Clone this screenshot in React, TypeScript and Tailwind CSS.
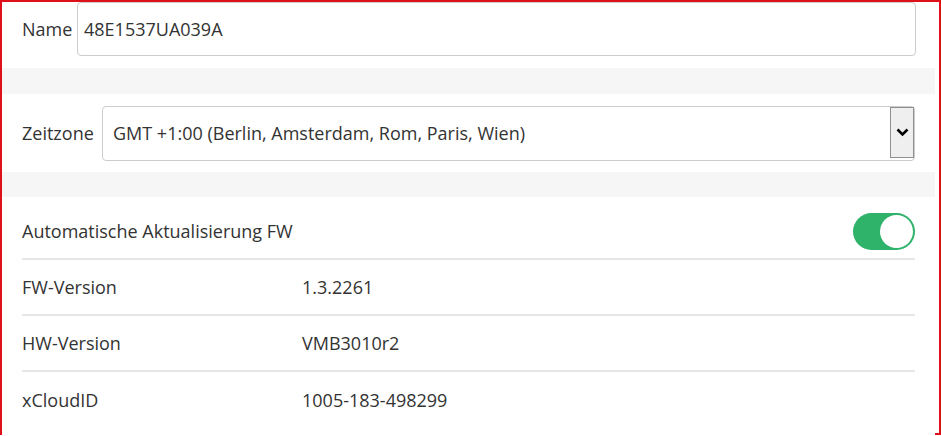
import { useState } from "react";

const rows = [
  { label: "FW-Version", value: "1.3.2261" },
  { label: "HW-Version", value: "VMB3010r2" },
  { label: "xCloudID", value: "1005-183-498299" },
];

export default function App() {
  const [name, setName] = useState("48E1537UA039A");
  const [autoUpdate, setAutoUpdate] = useState(true);

  return (
    <div
      className="h-[435px] w-[941px] border-2 border-[#e0101a] bg-white pr-[4px] text-[18px] text-[#333333]"
      style={{ fontFamily: '"Open Sans", "Liberation Sans", sans-serif' }}
    >
      <div className="bg-[#f6f6f6]">
        <div className="flex items-center bg-white pb-[12px] pl-[20px] pr-[19px]">
          <label htmlFor="name" className="w-[55px] shrink-0">
            Name
          </label>
          <input
            id="name"
            value={name}
            onChange={(e) => setName(e.target.value)}
            className="h-[54px] flex-1 rounded-[4px] border border-[#cccccc] bg-white px-[6px] text-[18px] text-[#333333] outline-none"
          />
        </div>

        <div className="mt-[26px] flex items-center bg-white pb-[11px] pl-[20px] pr-[20px] pt-[12px]">
          <span className="w-[80px] shrink-0">Zeitzone</span>
          <div className="flex h-[55px] flex-1 items-stretch rounded-[4px] border border-[#cccccc] bg-white">
            <div className="flex flex-1 items-center pl-[10px]">
              GMT +1:00 (Berlin, Amsterdam, Rom, Paris, Wien)
            </div>
            <div className="mb-[2px] flex w-[24px] items-center justify-center border border-[#8f8f8f] bg-[#efefef]">
              <svg width="13" height="9" viewBox="0 0 13 9">
                <path d="M1.5 1.5 L6.5 6.5 L11.5 1.5" fill="none" stroke="#000" strokeWidth="2.6" />
              </svg>
            </div>
          </div>
        </div>

        <div className="mt-[25px] bg-white px-[20px] pb-[8px] pt-[7px]">
          <div className="flex h-[56px] items-center justify-between border-b-2 border-[#e6e6e6]">
            <span>Automatische Aktualisierung FW</span>
            <button
              onClick={() => setAutoUpdate(!autoUpdate)}
              className={`relative h-[37px] w-[62px] rounded-full ${autoUpdate ? "bg-[#2fb36b]" : "bg-[#cccccc]"}`}
            >
              <span
                className={`absolute top-[2px] h-[33px] w-[33px] rounded-full bg-white ${autoUpdate ? "right-[2px]" : "left-[2px]"}`}
              />
            </button>
          </div>
          {rows.map((row, i) => (
            <div
              key={row.label}
              className={`flex h-[56px] items-center ${i < rows.length - 1 ? "border-b-2 border-[#e6e6e6]" : ""}`}
            >
              <span className="w-[280px]">{row.label}</span>
              <span>{row.value}</span>
            </div>
          ))}
        </div>
      </div>
    </div>
  );
}
